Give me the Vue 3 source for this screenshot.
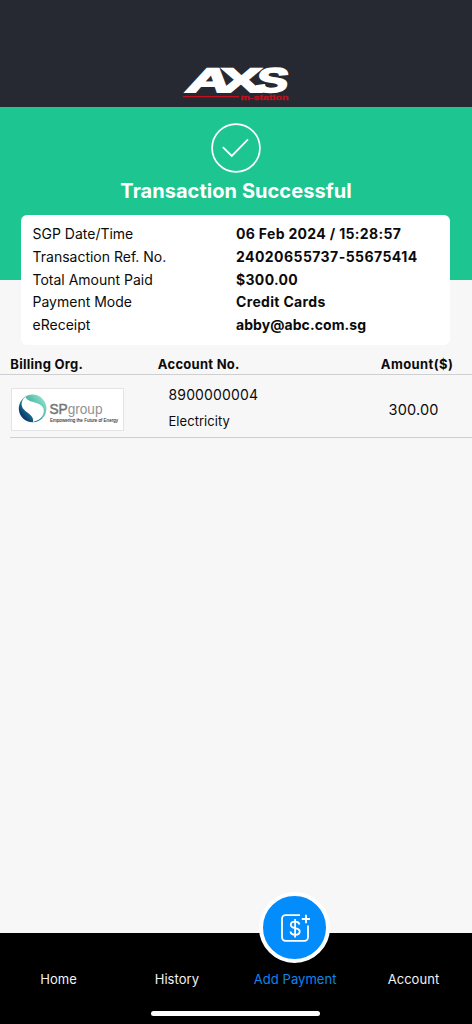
<script setup>
const details = [
  { label: 'SGP Date/Time', value: '06 Feb 2024 / 15:28:57', cls: 'v-date' },
  { label: 'Transaction Ref. No.', value: '24020655737-55675414', cls: 'v-ref' },
  { label: 'Total Amount Paid', value: '$300.00', cls: 'v-amt' },
  { label: 'Payment Mode', value: 'Credit Cards', cls: 'v-mode' },
  { label: 'eReceipt', value: 'abby@abc.com.sg', cls: 'v-mail' },
]
const tabs = ['Home', 'History', 'Add Payment', 'Account']
</script>

<template>
  <div class="screen">
    <header class="top">
      <svg class="axs" width="110" height="40" viewBox="0 0 110 40">
        <g class="axs-word">
          <text transform="translate(3.5 28) skewX(-15)" textLength="44" lengthAdjust="spacingAndGlyphs">A</text>
          <text transform="translate(39 28) skewX(-3)" textLength="41" lengthAdjust="spacingAndGlyphs">X</text>
          <text transform="translate(73.5 28) skewX(-10)" textLength="32" lengthAdjust="spacingAndGlyphs">S</text>
        </g>
        <rect x="2" y="32" width="56" height="1.3" fill="#c4101c" />
        <text class="axs-sub" x="59.5" y="36.4" textLength="48" lengthAdjust="spacingAndGlyphs">m-station</text>
      </svg>
    </header>

    <section class="hero">
      <svg class="tick" width="50" height="50" viewBox="0 0 50 50" fill="none" stroke="#fff">
        <circle cx="25" cy="25" r="23.9" stroke-width="1.7" />
        <path d="M11.8 24.2 20.8 33 37 16.4" stroke-width="1.8" />
      </svg>
      <h1>Transaction Successful</h1>
    </section>

    <dl class="card">
      <div v-for="d in details" :key="d.label" class="line">
        <dt>{{ d.label }}</dt>
        <dd :class="d.cls">{{ d.value }}</dd>
      </div>
    </dl>

    <section class="table">
      <div class="thead">
        <span>Billing Org.</span><span>Account No.</span><span class="amt">Amount($)</span>
      </div>
      <div class="row">
        <svg class="sp" width="113" height="44" viewBox="0 0 113 44">
          <defs>
            <linearGradient id="ring" x1="0.85" y1="0.15" x2="0.15" y2="0.75">
              <stop offset="0" stop-color="#86e0c4" />
              <stop offset="0.45" stop-color="#4fb5a8" />
              <stop offset="0.75" stop-color="#1a6d8c" />
              <stop offset="1" stop-color="#0b3f70" />
            </linearGradient>
          </defs>
          <rect x="0.5" y="0.5" width="112" height="42" fill="#fff" stroke="#e4e4e4" />
          <circle cx="21.6" cy="20.4" r="13.8" fill="url(#ring)" />
          <path d="M14.500 8.800C9 13.500 9.500 19.500 15 23.500 20 27 23 30 22 34 30 32 34 26.500 32.500 20.500 29.500 13 16.500 15.500 14.500 8.800Z" fill="#fff" />
          <text class="sp-name" x="38.500" y="25.800" textLength="53" lengthAdjust="spacingAndGlyphs"><tspan class="sp-bold">SP</tspan>group</text>
          <text class="sp-tag" x="39" y="34" textLength="68" lengthAdjust="spacingAndGlyphs">Empowering the Future of Energy</text>
        </svg>
        <div class="acct">
          <span class="num">8900000004</span>
          <span class="kind">Electricity</span>
        </div>
        <span class="sum">300.00</span>
      </div>
    </section>

    <nav class="nav">
      <div v-for="t in tabs" :key="t" class="tab" :class="{ active: t === 'Add Payment' }">
        <span v-if="t === 'Add Payment'" class="fab">
          <svg width="30" height="30" viewBox="0 0 30 30" fill="none" stroke="#fff" stroke-width="1.8">
            <path d="M20 2.200H5.500A3.500 3.500 0 0 0 2 5.700V24.300A3.500 3.500 0 0 0 5.500 27.800H24.500A3.500 3.500 0 0 0 28 24.300V12.500M26 1.800V10.200M21.800 6H30" />
            <path d="M19.500 11.500C19 9.500 17.300 8.700 15 8.700 12.500 8.700 10.800 10 10.800 12 10.800 16.500 19.700 13.800 19.700 18.500 19.700 20.500 17.800 21.800 15.200 21.800 12.500 21.800 10.700 20.600 10.400 18.500M15.100 6V24.500" />
          </svg>
        </span>
        {{ t }}
      </div>
      <i class="home-bar"></i>
    </nav>
  </div>
</template>

<style>
body { background: #f7f7f7; }
</style>

<style scoped>
.screen {
  width: 472px;
  height: 1024px;
  display: flex;
  flex-direction: column;
  background: #f7f7f7;
  font-family: Inter, "Liberation Sans", sans-serif;
  color: #0b0b0b;
  overflow: hidden;
}
.top {
  height: 107px;
  flex: none;
  box-sizing: border-box;
  padding: 64px 0 0 181px;
  background: #262932;
}
.axs { display: block; overflow: visible; }
.axs-word {
  font: 700 34px "Liberation Sans", sans-serif;
  fill: #fff;
  stroke: #fff;
  stroke-width: 1.8px;
}
.axs-sub {
  font: 700 8px "Liberation Sans", sans-serif;
  fill: #c4101c;
  stroke: #c4101c;
  stroke-width: 0.3px;
}
.hero {
  height: 173px;
  flex: none;
  box-sizing: border-box;
  padding-top: 16px;
  background: #1dc690;
  display: flex;
  flex-direction: column;
  align-items: center;
}
.tick { display: block; }
h1 {
  margin: 5px 0 0;
  color: #fff;
  font-size: 20px;
  line-height: 26px;
  font-weight: 700;
  letter-spacing: 0.05px;
}
.card {
  margin: -65px 22px 0 21px;
  height: 130px;
  flex: none;
  box-sizing: border-box;
  padding: 8px 0 0 11.500px;
  background: #fff;
  border-radius: 6px;
}
.line {
  display: grid;
  grid-template-columns: 203.500px 1fr;
  height: 22.800px;
  line-height: 22.800px;
  font-size: 14px;
  white-space: nowrap;
}
.line dd { margin: 0; font-weight: 700; letter-spacing: 0.33px; }
.line .v-ref { letter-spacing: 0.44px; }
.line .v-mail { letter-spacing: 0.07px; }
.thead {
  display: grid;
  grid-template-columns: 147.500px 223px 1fr;
  height: 30px;
  box-sizing: border-box;
  padding: 9px 0 0 10.300px;
  border-bottom: 1px solid #cfcfcf;
  font-size: 13px;
  line-height: 20px;
  font-weight: 700;
  letter-spacing: 0.27px;
}
.thead .amt { letter-spacing: 0.4px; }
.row {
  display: flex;
  margin-left: 10px;
  height: 63px;
  box-sizing: border-box;
  border-bottom: 1px solid #cfcfcf;
}
.sp { margin: 12.500px 0 0 1px; flex: none; overflow: visible; }
.sp-name { font: 400 15px "Liberation Sans", sans-serif; fill: #929292; }
.sp-bold { fill: #757575; stroke: #757575; stroke-width: 0.5px; }
.sp-tag { font: 400 4.600px "Liberation Sans", sans-serif; fill: #333; stroke: #333; stroke-width: 0.08px; }
.acct {
  display: flex;
  flex-direction: column;
  margin-left: 44.500px;
  padding-top: 7px;
  width: 220px;
  line-height: 26px;
}
.num { font-size: 14px; letter-spacing: 0.15px; }
.kind { font-size: 13px; letter-spacing: 0.05px; }
.sum { font-size: 14.500px; line-height: 69px; letter-spacing: 0.2px; }
.nav {
  position: relative;
  margin-top: auto;
  height: 91px;
  flex: none;
  box-sizing: border-box;
  padding: 36px 0 0;
  background: #000;
  display: grid;
  grid-template-columns: repeat(4, 118.300px);
  justify-content: center;
}
.tab {
  position: relative;
  text-align: center;
  color: #f2f2f2;
  font-size: 13px;
  line-height: 20px;
  letter-spacing: 0.05px;
}
.active { color: #0b86ee; }
.fab {
  position: absolute;
  left: 23px;
  top: -77px;
  width: 63px;
  height: 63px;
  border: 4.500px solid #fff;
  border-radius: 50%;
  background: #038cfc;
  display: flex;
  align-items: center;
  justify-content: center;
}
.home-bar {
  position: absolute;
  left: 151px;
  bottom: 8px;
  width: 169px;
  height: 5.500px;
  border-radius: 3px;
  background: #fff;
}
</style>
